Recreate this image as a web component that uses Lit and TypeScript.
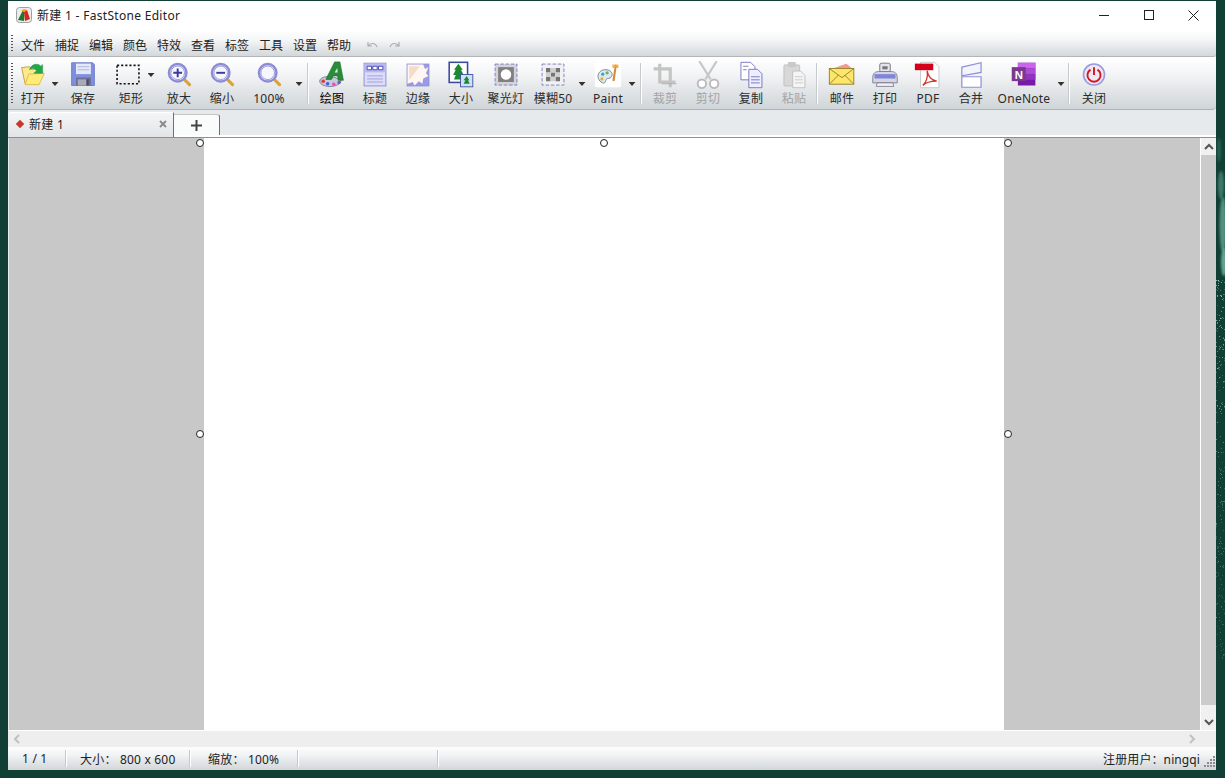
import { LitElement, html, css, svg } from "lit";
import { customElement } from "lit/decorators.js";
import { styleMap } from "lit/directives/style-map.js";

const ic = (c: unknown, w = 28, h = 28, vb = "0 0 32 32") =>
  html`<svg width=${w} height=${h} viewBox=${vb}>${c}</svg>`;

const mag = (inner: unknown) => svg`
  <path d="M21 20l7 7" stroke="#d9a23a" stroke-width="3.6" stroke-linecap="round"/>
  <circle cx="14.500" cy="13.500" r="10" fill="#fff" stroke="#8c8cd6" stroke-width="2.800"/>
  <circle cx="14.500" cy="13.500" r="7.800" fill="#f6f6ff" stroke="#5f5fb8" stroke-width=".7"/>
  ${inner}`;

const icons: Record<string, unknown> = {
  open: svg`
    <path d="M5 11h8l2 2h9v13H8z" fill="#d9a92e"/>
    <path d="M3 7.500l9-1 2 3 10-.5-2 17H7z" fill="#ffe98a" stroke="#c29a2c" stroke-width="1"/>
    <path d="M7 27l4-12 18-1-6 13z" fill="#ffec7a" stroke="#d2ab39" stroke-width=".8"/>
    <path d="M12 10c2-7 10-8 13-4l2-2v10h-10l3-3c-2-3-5-3-8-1z" fill="#22a845" stroke="#168636" stroke-width=".5"/>`,
  save: svg`
    <path d="M3 2h24l2 2v24H3z" fill="#7f8fe0" stroke="#6a78c8"/>
    <rect x="8" y="3" width="17" height="12" fill="#e4eaf9"/>
    <path d="M10 6.500h13M10 10h13" stroke="#a8b2d8"/>
    <rect x="8" y="19" width="17" height="9" fill="#6d6d92"/>
    <rect x="10" y="21" width="10" height="7" fill="#a9a9b9"/><rect x="20" y="21" width="2.400" height="7" fill="#484866"/>`,
  rect: svg`<rect x="3.500" y="5" width="25" height="21" fill="none" stroke="#111" stroke-width="1.800" stroke-dasharray="2.400 2.300"/>`,
  zoomin: mag(svg`<path d="M9.500 13.500h10M14.500 8.500v10" stroke="#3b3b9a" stroke-width="2.200"/>`),
  zoomout: mag(svg`<path d="M9.500 13.500h10" stroke="#3b3b9a" stroke-width="2.200"/>`),
  zoom: mag(svg``),
  draw: svg`
    <path d="M2 23c0-4 7-6 13-5s12 3 11 6-9 6-15 5-9-3-9-6z" fill="#c9c9d9" stroke="#77778e"/>
    <path d="M9 21L19 1h6l4 21h-6l-.6-5h-5l-2 4z" fill="#2a8c3a" stroke="#126b25" stroke-width=".7"/>
    <path d="M19 13h3.500l-.5-5z" fill="#d8efd8"/>
    <circle cx="6" cy="23" r="2" fill="#d63a3a"/><circle cx="11" cy="26" r="2" fill="#4060e0"/><circle cx="18" cy="26.500" r="2" fill="#e050c0"/><circle cx="24" cy="24.500" r="2" fill="#7b52d8"/>`,
  title: svg`
    <rect x="3.500" y="2.500" width="25" height="26" fill="#dcdcfa" stroke="#8585d0"/>
    <rect x="4" y="3" width="24" height="10" fill="#b9b9ef"/>
    <path d="M7 6h5v4H7zM13.500 6h5v4h-5zM20 6h5v4h-5z" fill="#fff" stroke="#3d3db0" stroke-width="1"/>
    <path d="M7 17h18M7 20.500h18M7 24h18" stroke="#9a9ad8"/>`,
  edge: svg`
    <rect x="3.500" y="3.500" width="25" height="25" fill="#9a9aea" stroke="#8d8dcf"/>
    <path d="M4 4h18l2 5 4-2-3 7 3 3-6 3-1 6-4-3-5 5-2-4-6 2z" fill="#fdf7ef"/>
    <path d="M6 6h12L6 22z" fill="#f4dcc9"/>`,
  size: svg`
    <rect x="2.500" y="1.500" width="21" height="23" fill="#fff" stroke="#3c4b99" stroke-width="1.800"/>
    <path d="M13 3l5 7h-2l3 6h-3l2 5H8l2-5H7l3-6H8z" fill="#198a30"/>
    <rect x="15.500" y="15.500" width="14" height="14" fill="#cfe0fb" stroke="#3c4b99"/>
    <path d="M22.500 17l3 5h-1.500l2 4h-7l2-4H19z" fill="#198a30"/>`,
  spot: svg`
    <rect x="3.500" y="3.500" width="25" height="24" fill="#d4d4d8" stroke="#7575c8" stroke-dasharray="4 2"/>
    <rect x="7" y="7" width="18" height="17" fill="#808080"/>
    <circle cx="16" cy="15.500" r="6" fill="#fff"/>`,
  blur: svg`
    <rect x="3.500" y="3.500" width="25" height="24" fill="#f1f1f1" stroke="#7575c8" stroke-dasharray="4 2"/>
    <path d="M8 8h5v5H8zM19 8h5v5h-5zM13.500 13h5v5h-5zM8 18h5v5H8zM19 18h5v5h-5z" fill="#747474"/>
    <path d="M13.500 8h5v5h-5zM8 13h5v5H8zM19 13h5v5h-5zM13.500 18h5v5h-5z" fill="#cfcfcf"/>`,
  paint: svg`
    <rect x="1" y="2" width="30" height="28" rx="2" fill="#fff"/>
    <path d="M5 20c-2-6 3-11 10-10 5 1 7 5 5 8s-5 1-6 3-1 5-4 4-4-3-5-5z" fill="#dfe8ee" stroke="#66808f"/>
    <circle cx="10" cy="15" r="1.800" fill="#3aa0d8"/><circle cx="15" cy="13.500" r="1.800" fill="#6bb54a"/><circle cx="9" cy="20.500" r="1.800" fill="#e0b030"/>
    <path d="M24 4l2 1-2.500 18-2.500-.5z" fill="#d88a30"/><path d="M21 4h7v4h-7z" fill="#f0a030" opacity=".8"/>`,
  crop: svg`<path d="M10 3v21h18M3 9h19v21" fill="none" stroke="#c4c4c4" stroke-width="3.600"/><path d="M12 26h17" stroke="#a8a8a8"/>`,
  cut: svg`
    <path d="M6 0l13 21M26 0L13 21" stroke="#c6c6c6" stroke-width="2.400"/>
    <circle cx="9" cy="26" r="4.800" fill="#fff" stroke="#bbb" stroke-width="2.200"/>
    <circle cx="23" cy="26" r="4.800" fill="#fff" stroke="#bbb" stroke-width="2.200"/>`,
  copy: svg`
    <path d="M4.500 1.500h11l5 5v15h-16z" fill="#fff" stroke="#6e6ec0"/>
    <path d="M13.500 9.500h10l5 5v16h-15z" fill="#eeeeff" stroke="#6e6ec0"/>
    <path d="M7 6h6M7 10h4M16 18h10M16 21.500h10M16 25h10" stroke="#6e6ec0"/>`,
  paste: svg`
    <rect x="4.500" y="4.500" width="18" height="24" rx="1" fill="#d8d8d8" stroke="#bdbdbd"/>
    <rect x="9" y="1" width="9" height="6" rx="1" fill="#c9c9c9"/>
    <path d="M14.500 11.500h9l5 5v14h-14z" fill="#f5f5f5" stroke="#bdbdbd"/>
    <path d="M17 18h9M17 21.500h9M17 25h9" stroke="#c6c6c6"/>`,
  mail: svg`
    <path d="M7 8l14-5 6 5z" fill="#f29a8e"/>
    <rect x="1.500" y="8.500" width="28" height="18" fill="#fde66a" stroke="#8d7a22"/>
    <path d="M2 9l14 10 13-10M2 26l10-10M29 26L19 16" fill="none" stroke="#8d7a22"/>`,
  print: svg`
    <rect x="10" y="2.500" width="12" height="10" rx="2" fill="#e4e4ee" stroke="#6c6c7a"/>
    <rect x="13" y="6" width="6" height="3.500" fill="#777"/>
    <path d="M2 19c0-5 3-7 7-7h14c4 0 7 2 7 7v6H2z" fill="#d4d4e4" stroke="#7b7b8c"/>
    <path d="M4 15h24v5H4z" fill="#7f86d8"/>
    <path d="M7 25l-1 4h20l-1-4z" fill="#f2f2f6" stroke="#7b7b8c"/>`,
  pdf: svg`
    <path d="M7.500 1.500h16l5 5v24h-21z" fill="#fff" stroke="#c4c4c4"/>
    <rect x="1" y="3" width="21" height="7.500" fill="#d4001a"/>
    <path d="M10 28c4-4 6-11 5-17 1 6 4 11 11 12-7 0-12 1-16 5z" fill="none" stroke="#d4342a" stroke-width="1.500"/>`,
  merge: svg`
    <path d="M5.500 7l22-5v11l-22 4z" fill="#f4f4ff" stroke="#8f8fd8" stroke-width="1.400"/>
    <path d="M5.500 18h22v12h-22z" fill="#fff" stroke="#8f8fd8" stroke-width="1.400"/>`,
  onenote: svg`
    <rect x="9" y="2" width="20" height="26" fill="#7719aa"/>
    <rect x="9" y="2" width="20" height="6.500" fill="#ca64ea"/><rect x="9" y="8.500" width="20" height="6.500" fill="#ae4bd5"/><rect x="9" y="15" width="20" height="6.500" fill="#9332bf"/>
    <rect x="2" y="7" width="16" height="16" fill="#7a3a8f"/>
    <text x="10" y="20" text-anchor="middle" font-size="13" font-weight="700" fill="#fff" font-family="Liberation Sans">N</text>`,
  close: svg`
    <circle cx="16" cy="15.500" r="12" fill="#ece8f6" stroke="#9a9ade" stroke-width="1.800"/>
    <path d="M12 9.800a7.500 7.500 0 1 0 8 0" fill="none" stroke="#d9161c" stroke-width="2.200"/>
    <path d="M16 7v9" stroke="#d9161c" stroke-width="2.200"/>`,
};

type Item =
  | { k: "tool"; cx: number; icon: string; label: string; off?: boolean; strong?: boolean; w?: number; nudge?: boolean }
  | { k: "arrow"; cx: number; high?: boolean }
  | { k: "sep"; cx: number };

const t = (cx: number, icon: string, label: string, o: object = {}) =>
  ({ k: "tool", cx, icon, label, ...o } as Item);
const a = (cx: number, high = false) => ({ k: "arrow", cx, high } as Item);
const s = (cx: number) => ({ k: "sep", cx } as Item);

const items: Item[] = [
  t(33, "open", "打开"), a(55), t(83, "save", "保存"), t(131, "rect", "矩形", { w: 36, nudge: true }), a(151, true),
  t(179, "zoomin", "放大"), t(222, "zoomout", "缩小"), t(269, "zoom", "100%"), a(299), s(308),
  t(332, "draw", "绘图", { strong: true }), t(375, "title", "标题"), t(418, "edge", "边缘"), t(461, "size", "大小"),
  t(506, "spot", "聚光灯"), t(553, "blur", "模糊50"), a(582), t(608, "paint", "Paint"), a(632), s(641),
  t(665, "crop", "裁剪", { off: true }), t(708, "cut", "剪切", { off: true }), t(751, "copy", "复制"),
  t(794, "paste", "粘贴", { off: true }), s(817),
  t(842, "mail", "邮件"), t(885, "print", "打印"), t(928, "pdf", "PDF"), t(971, "merge", "合并"),
  t(1024, "onenote", "OneNote", { w: 60 }), a(1061), s(1069), t(1094, "close", "关闭"),
];

const widthOf = (i: Item) => (i.k === "sep" ? 2 : i.k === "arrow" ? 7 : i.w ?? 40);
const ORIGIN = 13;

const menus = ["文件", "捕捉", "编辑", "颜色", "特效", "查看", "标签", "工具", "设置", "帮助"];

// deterministic speckle for the desktop wallpaper strip on the right edge
const speck = (() => {
  const out: { x: number; y: number; o: number }[] = [];
  let r = 12345;
  const next = () => (r = (r * 1103515245 + 12345) & 0x7fffffff) / 0x7fffffff;
  for (let i = 0; i < 230; i++) {
    const y = 280 + Math.pow(next(), 1.5) * 380;
    out.push({ x: Math.floor(next() * 9), y: Math.floor(y), o: 0.2 + next() * 0.6 * (1 - (y - 280) / 420) });
  }
  return out;
})();

@customElement("app-root")
export class AppRoot extends LitElement {
  static styles = css`
    :host {
      display: block;
      width: 1225px;
      height: 778px;
      overflow: hidden;
      position: relative;
      font-family: "Noto Sans", "Noto Sans CJK SC", sans-serif;
      font-size: 12px;
      color: #222;
      background-color: #123f35;
    }
    .texture { position: absolute; right: 0; top: 0; width: 9px; height: 778px; }
    .blob { filter: blur(1px); }
    .window {
      position: absolute;
      left: 8px;
      top: 1px;
      width: 1208px;
      height: 769px;
      display: flex;
      flex-direction: column;
      background: #e8ebee;
    }
    .titlebar {
      height: 29px;
      box-sizing: border-box;
      padding-bottom: 1px;
      flex: none;
      background: #fff;
      display: flex;
      align-items: center;
      padding-left: 8px;
      gap: 5px;
      font-size: 12px;
      letter-spacing: .3px;
    }
    .title { flex: 1; color: #222; }
    .wbtns { display: flex; flex: none; }
    .wbtn { width: 45px; height: 28px; display: flex; align-items: center; justify-content: center; }
    .menu {
      height: 27px;
      flex: none;
      box-sizing: border-box;
      display: flex;
      align-items: center;
      background: linear-gradient(#fff 0%, #f6f7f8 35%, #d3d8db 100%);
      border-bottom: 1px solid #b3b6b8;
      border-radius: 0 0 3px 0;
      padding-left: 3px;
      padding-top: 4px;
    }
    .grip {
      width: 2px;
      background-image: linear-gradient(#555 50%, transparent 50%);
      background-size: 2px 3px;
      flex: none;
      align-self: center;
    }
    .menu .grip { height: 18px; margin-right: 8px; margin-top: -2px; }
    .mi { width: 34px; flex: none; white-space: nowrap; color: #222; }
    .mi-undo { display: flex; gap: 9px; margin-left: 4px; }
    .toolbar {
      height: 53px;
      flex: none;
      box-sizing: border-box;
      display: flex;
      background: linear-gradient(#fff 0%, #f4f5f6 30%, #cfd5d8 100%);
      border-top: 1px solid #fff;
      border-bottom: 1px solid #aeb2b4;
      border-radius: 0 0 4px 0;
      position: relative;
      padding-left: 5px;
    }
    .toolbar .grip { position: absolute; left: 3px; top: 5px; height: 42px; }
    .tool {
      display: flex;
      flex-direction: column;
      align-items: center;
      flex: none;
      white-space: nowrap;
      padding-top: 3px;
      height: 48px;
    }
    .tool svg { display: block; flex: none; margin-bottom: 2px; }
    .tool.nudge svg { margin-right: 6px; }
    .tool .lbl { line-height: 16px; color: #2b2b2b; letter-spacing: .25px; }
    .tool.off .lbl { color: #a2a4a6; }
    .tool.strong .lbl { color: #000; }
    .arrow {
      flex: none;
      height: 4px;
      background: #333;
      clip-path: polygon(0 0, 100% 0, 50% 100%);
      margin-top: 24px;
    }
    .arrow.high { margin-top: 15px; }
    .sep {
      flex: none;
      width: 1px;
      margin-top: 5px;
      height: 41px;
      background: #c6cacc;
      border-right: 1px solid #fff;
    }
    .tabs {
      height: 28px;
      flex: none;
      box-sizing: border-box;
      display: flex;
      align-items: flex-end;
      background: #e7eaed;
      border-bottom: 1px solid #8f8f8f;
      box-shadow: inset 0 -2px 0 #fff;
    }
    .tab {
      box-sizing: border-box;
      display: flex;
      align-items: center;
      border-right: 1px solid #6f6f6f;
    }
    .tab.main {
      width: 166px;
      height: 25px;
      padding: 0 6px 2px 9px;
      background: linear-gradient(#f4f5f6, #e2e5e8);
      border-top: 1px solid #fff;
      border-top-left-radius: 3px;
    }
    .tab.main .name { flex: 1; margin-left: 6px; letter-spacing: .3px; }
    .tab.add {
      width: 46px;
      height: 21px;
      margin-bottom: 2px;
      justify-content: center;
      background: #fafbfb;
      font-size: 0;
      border-top: 1px solid #c4c4c4;
      border-top-right-radius: 3px;
    }
    .diamond { width: 6px; height: 6px; background: #c8392b; transform: rotate(45deg); flex: none; }
    .mid { flex: 1; min-height: 0; display: flex; }
    .canvas {
      flex: none;
      box-sizing: border-box;
      width: 1191px;
      margin-left: 1px;
      padding-right: 1px;
      background: #c8c8c8;
      position: relative;
      display: flex;
      justify-content: center;
      overflow: hidden;
    }
    .paper { width: 800px; background: #fff; }
    .h {
      position: absolute;
      width: 8px;
      height: 8px;
      box-sizing: border-box;
      border: 1px solid #222;
      border-radius: 50%;
      background: #fff;
      transform: translate(-50%, -50%);
    }
    .h.hl { left: 191px; }
    .h.hc { left: 595px; }
    .h.hr { left: 999px; }
    .h.vt { top: 5px; }
    .h.vm { top: 296px; }
    .vbar {
      flex: none;
      width: 15px;
      border-left: 1px solid #fff;
      background: #f0f0f0;
      display: flex;
      flex-direction: column;
    }
    .vbar .btn { height: 17px; flex: none; display: flex; align-items: center; justify-content: center; }
    .vbar .thumb { flex: 1; background: #cbcbcb; margin-bottom: 8px; }
    .hbar {
      height: 17px;
      flex: none;
      box-sizing: border-box;
      border-top: 1px solid #fff;
      background: #eeeeee;
      display: flex;
      align-items: center;
      justify-content: space-between;
      padding: 0 20px 0 5px;
    }
    .status {
      height: 23px;
      flex: none;
      display: flex;
      align-items: center;
      background: linear-gradient(#fdfdfd 0%, #f1f3f4 35%, #d2d7da 100%);
      letter-spacing: .2px;
    }
    .cell { box-sizing: border-box; height: 17px; display: flex; align-items: center; border-right: 1px solid #c4c8ca; box-shadow: 1px 0 0 #fff; flex: none; white-space: pre; }
    .c1 { width: 58px; padding-left: 14px; }
    .c2 { width: 124px; padding-left: 14px; }
    .c3 { width: 108px; padding-left: 18px; }
    .c4 { width: 140px; }
    .reg { flex: 1; text-align: right; padding-right: 4px; letter-spacing: .1px; }
    .sizer { flex: none; align-self: flex-end; height: 12px; margin-bottom: 2px; }
    .sizer svg { display: block; }
  `;

  private renderItems() {
    let x = ORIGIN;
    return items.map((i) => {
      const w = widthOf(i);
      const left = i.cx - w / 2;
      const style = styleMap({ width: i.k === "sep" ? "" : `${w}px`, marginLeft: `${left - x}px` });
      x = left + w;
      if (i.k === "arrow") return html`<div class="arrow ${i.high ? "high" : ""}" style=${style}></div>`;
      if (i.k === "sep") return html`<div class="sep" style=${style}></div>`;
      return html`<div class="tool ${i.off ? "off" : ""} ${i.strong ? "strong" : ""} ${i.nudge ? "nudge" : ""}" style=${style}>
        ${ic(icons[i.icon])}<span class="lbl">${i.label}</span>
      </div>`;
    });
  }

  render() {
    return html`
      <svg class="texture" viewBox="0 0 9 778">
        <g class="blob">
          <ellipse cx="5" cy="185" rx="3" ry="14" fill="#4d8d7a" opacity=".75"/>
          <ellipse cx="7" cy="225" rx="3.500" ry="28" fill="#5f9f8c" opacity=".85"/>
          <ellipse cx="8" cy="262" rx="3" ry="14" fill="#6fae9b" opacity=".9"/>
          <ellipse cx="3" cy="150" rx="2" ry="12" fill="#2f6f5e" opacity=".7"/>
        </g>
        ${speck.map((p) => svg`<rect x=${p.x} y=${p.y} width="1" height="1" fill="#9fd2c2" opacity=${p.o}/>`)}
      </svg>
      <div class="window">
        <div class="titlebar">
          ${ic(svg`
            <rect x=".5" y=".5" width="15" height="15" rx="3" fill="#ececec" stroke="#a0a0a0"/>
            <path d="M2 13L7 3l1.500 2L8 14z" fill="#1a7a30"/>
            <path d="M8 5l3-2 3 9-5 2z" fill="#d8261c"/>
            <path d="M5 4l3-2 3 1-3 2z" fill="#e8a42a"/>`, 16, 16, "0 0 16 16")}
          <span class="title">新建 1 - FastStone Editor</span>
          <div class="wbtns">
            <div class="wbtn">${ic(svg`<path d="M0 5.500h10" stroke="#222"/>`, 10, 10, "0 0 10 10")}</div>
            <div class="wbtn">${ic(svg`<rect x=".5" y=".5" width="9" height="9" fill="none" stroke="#222"/>`, 10, 10, "0 0 10 10")}</div>
            <div class="wbtn">${ic(svg`<path d="M.5.500l10 10M10.500.500l-10 10" stroke="#222" fill="none"/>`, 11, 11, "0 0 11 11")}</div>
          </div>
        </div>
        <div class="menu">
          <div class="grip"></div>
          ${menus.map((m) => html`<span class="mi">${m}</span>`)}
          <div class="mi-undo">
            ${ic(svg`<path d="M3 3v4h4M3.500 7C5 4 10 3 12 8" fill="none" stroke="#a9adb0" stroke-width="1.200"/>`, 14, 12, "0 0 14 12")}
            ${ic(svg`<path d="M11 3v4H7M10.500 7C9 4 4 3 2 8" fill="none" stroke="#a9adb0" stroke-width="1.200"/>`, 14, 12, "0 0 14 12")}
          </div>
        </div>
        <div class="toolbar">
          <div class="grip"></div>
          ${this.renderItems()}
        </div>
        <div class="tabs">
          <div class="tab main">
            <div class="diamond"></div>
            <span class="name">新建 1</span>
            ${ic(svg`<path d="M1 1l6 6M7 1L1 7" stroke="#888" stroke-width="1.800"/>`, 8, 8, "0 0 8 8")}
          </div>
          <div class="tab add">
            ${ic(svg`<path d="M5.500 0v11M0 5.500h11" stroke="#444" stroke-width="2"/>`, 11, 11, "0 0 11 11")}
          </div>
        </div>
        <div class="mid">
          <div class="canvas">
            <div class="paper"></div>
            <div class="h hl vt"></div>
            <div class="h hc vt"></div>
            <div class="h hr vt"></div>
            <div class="h hl vm"></div>
            <div class="h hr vm"></div>
          </div>
          <div class="vbar">
            <div class="btn">${ic(svg`<path d="M1 6l4-4 4 4" fill="none" stroke="#555" stroke-width="2"/>`, 10, 8, "0 0 10 8")}</div>
            <div class="thumb"></div>
            <div class="btn">${ic(svg`<path d="M1 2l4 4 4-4" fill="none" stroke="#555" stroke-width="2"/>`, 10, 8, "0 0 10 8")}</div>
          </div>
        </div>
        <div class="hbar">
          ${ic(svg`<path d="M6 1L2 5l4 4" fill="none" stroke="#c0c0c0" stroke-width="2"/>`, 8, 10, "0 0 8 10")}
          ${ic(svg`<path d="M2 1l4 4-4 4" fill="none" stroke="#c0c0c0" stroke-width="2"/>`, 8, 10, "0 0 8 10")}
        </div>
        <div class="status">
          <div class="cell c1">1 / 1</div>
          <div class="cell c2">大小： 800 x 600</div>
          <div class="cell c3">缩放： 100%</div>
          <div class="cell c4"></div>
          <span class="reg">注册用户：ningqi</span>
          <div class="sizer">
            ${ic(svg`<path d="M9 0h2v2H9zM6 3h2v2H6zM9 3h2v2H9zM3 6h2v2H3zM6 6h2v2H6zM9 6h2v2H9zM0 9h2v2H0zM3 9h2v2H3zM6 9h2v2H6zM9 9h2v2H9z" fill="#8a8e90"/>`, 12, 12, "0 0 12 12")}
          </div>
        </div>
      </div>
    `;
  }
}
